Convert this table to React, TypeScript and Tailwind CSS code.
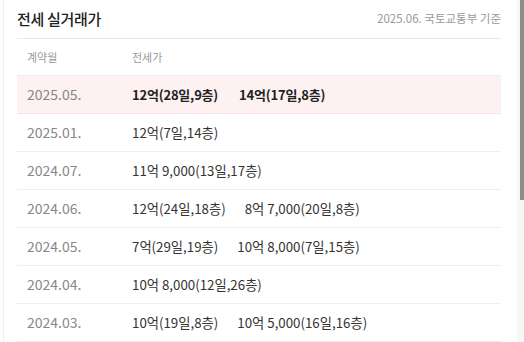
import React from "react";

const rows: { date: string; prices: string[]; hi?: boolean }[] = [
  { date: "2025.05.", prices: ["12억(28일,9층)", "14억(17일,8층)"], hi: true },
  { date: "2025.01.", prices: ["12억(7일,14층)"] },
  { date: "2024.07.", prices: ["11억 9,000(13일,17층)"] },
  { date: "2024.06.", prices: ["12억(24일,18층)", "8억 7,000(20일,8층)"] },
  { date: "2024.05.", prices: ["7억(29일,19층)", "10억 8,000(7일,15층)"] },
  { date: "2024.04.", prices: ["10억 8,000(12일,26층)"] },
  { date: "2024.03.", prices: ["10억(19일,8층)", "10억 5,000(16일,16층)"] },
];

export default function App() {
  return (
    <div
      className="w-[524px] h-[342px] overflow-hidden flex bg-white"
      style={{ fontFamily: '"Noto Sans CJK KR", "Noto Sans", sans-serif' }}
    >
      <div className="w-[3px]" />
      <div className="flex-1 border-l border-[#eeeeee] pl-[13px] pr-[16px]">
        <div className="w-[484px]">
          <div className="h-[39px] flex items-center justify-between border-b border-[#e8e8e8]">
            <div className="text-[15px] font-medium text-[#222] tracking-[-0.3px]">전세 실거래가</div>
            <div className="text-[11.5px] text-[#999]">2025.06. 국토교통부 기준</div>
          </div>
          <div className="h-[37px] flex items-center text-[11px] text-[#999] border-b border-[#eeeeee]">
            <div className="w-[115px] pl-[10px]">계약월</div>
            <div>전세가</div>
          </div>
          {rows.map((r) => (
            <div
              key={r.date}
              className={
                r.hi
                  ? "h-[38px] flex items-center bg-[#fdf1f1] border-b border-[#f6e4e4]"
                  : "h-[38px] flex items-center border-b border-[#eeeeee]"
              }
            >
              <div className="w-[115px] pl-[10px] text-[14px] text-[#888]">{r.date}</div>
              <div
                className={
                  r.hi
                    ? "flex gap-[21px] text-[13px] font-semibold text-[#222] tracking-[-0.2px]"
                    : "flex gap-[19px] text-[13.3px] text-[#333]"
                }
              >
                {r.prices.map((p) => (
                  <span key={p}>{p}</span>
                ))}
              </div>
            </div>
          ))}
        </div>
      </div>
      <div className="w-[7px] h-full bg-[#f7f7f7] flex justify-end">
        <div className="w-[4px] h-[200px] bg-[#8c8c8c]" />
      </div>
    </div>
  );
}
